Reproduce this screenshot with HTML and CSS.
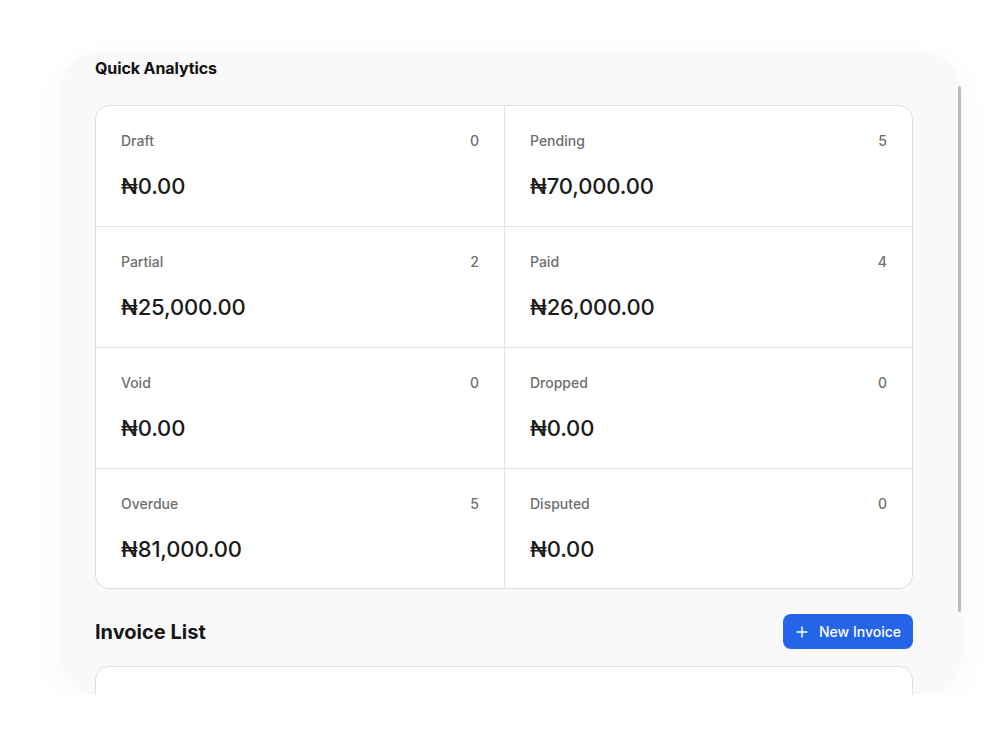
FILE: index.html
```html
<!DOCTYPE html>
<html lang="en">
<head>
<meta charset="utf-8">
<title>Invoices</title>
<link rel="stylesheet" href="styles.css">
</head>
<body>
<div class="window">
  <div class="content">
    <h2 class="section-title">Quick Analytics</h2>
    <div class="stats">
      <div class="stat"><div class="stat-head"><span>Draft</span><span>0</span></div><div class="stat-amount">₦0.00</div></div>
      <div class="stat"><div class="stat-head"><span>Pending</span><span>5</span></div><div class="stat-amount">₦70,000.00</div></div>
      <div class="stat"><div class="stat-head"><span>Partial</span><span>2</span></div><div class="stat-amount">₦25,000.00</div></div>
      <div class="stat"><div class="stat-head"><span>Paid</span><span>4</span></div><div class="stat-amount">₦26,000.00</div></div>
      <div class="stat"><div class="stat-head"><span>Void</span><span>0</span></div><div class="stat-amount">₦0.00</div></div>
      <div class="stat"><div class="stat-head"><span>Dropped</span><span>0</span></div><div class="stat-amount">₦0.00</div></div>
      <div class="stat"><div class="stat-head"><span>Overdue</span><span>5</span></div><div class="stat-amount">₦81,000.00</div></div>
      <div class="stat"><div class="stat-head"><span>Disputed</span><span>0</span></div><div class="stat-amount">₦0.00</div></div>
    </div>
    <div class="list-head">
      <h2 class="list-title">Invoice List</h2>
      <button class="btn-new"><svg width="12" height="12" viewBox="0 0 12 12"><path d="M6 1v10M1 6h10" stroke="#fff" stroke-width="1.5" stroke-linecap="round"/></svg><span>New Invoice</span></button>
    </div>
    <div class="list-card"></div>
  </div>
  <div class="scrollbar"></div>
</div>
</body>
</html>
```

FILE: styles.css
```css
* { box-sizing: border-box; }
html, body { margin: 0; padding: 0; background: #ffffff; }
body {
  font-family: Inter, "Noto Sans", "Liberation Sans", sans-serif;
  padding: 52px 0 0 60px;
}
.window {
  position: relative;
  width: 902px;
  height: 643px;
  background: #f9f9f9;
  border-radius: 40px;
  overflow: hidden;
  box-shadow: 0 10px 40px rgba(0,0,0,0.03);
}
.content {
  padding: 6px 49px 0 35px;
}
.section-title {
  margin: 0;
  font-size: 16px;
  line-height: 20px;
  font-weight: 700;
  color: #111;
  letter-spacing: -0.1px;
}
.stats {
  margin-top: 27px;
  display: grid;
  grid-template-columns: 409px 1fr;
  background: #fff;
  border: 1px solid #dedede;
  border-radius: 14px;
  overflow: hidden;
}
.stat {
  padding: 25px 25px 24px 25px;
  border-bottom: 1px solid #e3e3e3;
}
.stat:nth-child(odd) { border-right: 1px solid #e3e3e3; }
.stat:nth-last-child(-n+2) { border-bottom: none; padding-bottom: 23px; }
.stat-head {
  display: flex;
  justify-content: space-between;
  font-size: 14px;
  line-height: 20px;
  font-weight: 500;
  color: #6e6e6e;
}
.stat-amount {
  margin-top: 19px;
  font-size: 22px;
  line-height: 32px;
  color: #1b1b1b;
  font-weight: 500;
  letter-spacing: -0.15px;
}
.list-head {
  margin-top: 25px;
  display: flex;
  justify-content: space-between;
  align-items: center;
}
.list-title {
  margin: 0;
  font-size: 20px;
  line-height: 28px;
  font-weight: 700;
  color: #161616;
}
.btn-new {
  display: flex;
  align-items: center;
  gap: 11px;
  height: 35px;
  padding: 0 12px 0 13px;
  background: #2464e8;
  border: none;
  border-radius: 8px;
  color: #fff;
  font-family: inherit;
  font-size: 14px;
  font-weight: 500;
}
.list-card {
  margin-top: 17px;
  height: 120px;
  background: #fff;
  border: 1px solid #dedede;
  border-radius: 14px;
}
.scrollbar {
  position: absolute;
  right: 1px;
  top: 34px;
  width: 3px;
  height: 526px;
  background: #bdbdbd;
  border-radius: 2px;
}
```
